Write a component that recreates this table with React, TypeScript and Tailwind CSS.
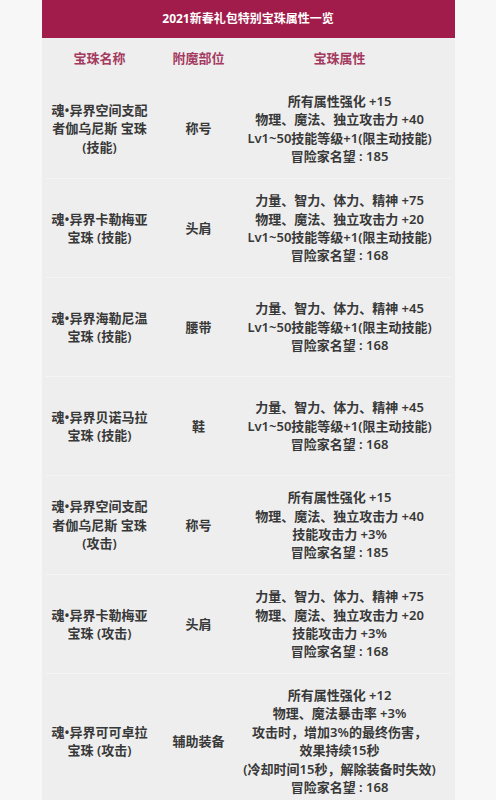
import React from 'react';

interface Gem {
  name: string[];
  slot: string;
  attrs: string[];
}

const gems: Gem[] = [
  {
    name: ['魂•异界空间支配', '者伽乌尼斯 宝珠', '(技能)'],
    slot: '称号',
    attrs: ['所有属性强化 +15', '物理、魔法、独立攻击力 +40', 'Lv1~50技能等级+1(限主动技能)', '冒险家名望 : 185'],
  },
  {
    name: ['魂•异界卡勒梅亚', '宝珠 (技能)'],
    slot: '头肩',
    attrs: ['力量、智力、体力、精神 +75', '物理、魔法、独立攻击力 +20', 'Lv1~50技能等级+1(限主动技能)', '冒险家名望 : 168'],
  },
  {
    name: ['魂•异界海勒尼温', '宝珠 (技能)'],
    slot: '腰带',
    attrs: ['力量、智力、体力、精神 +45', 'Lv1~50技能等级+1(限主动技能)', '冒险家名望 : 168'],
  },
  {
    name: ['魂•异界贝诺马拉', '宝珠 (技能)'],
    slot: '鞋',
    attrs: ['力量、智力、体力、精神 +45', 'Lv1~50技能等级+1(限主动技能)', '冒险家名望 : 168'],
  },
  {
    name: ['魂•异界空间支配', '者伽乌尼斯 宝珠', '(攻击)'],
    slot: '称号',
    attrs: ['所有属性强化 +15', '物理、魔法、独立攻击力 +40', '技能攻击力 +3%', '冒险家名望 : 185'],
  },
  {
    name: ['魂•异界卡勒梅亚', '宝珠 (攻击)'],
    slot: '头肩',
    attrs: ['力量、智力、体力、精神 +75', '物理、魔法、独立攻击力 +20', '技能攻击力 +3%', '冒险家名望 : 168'],
  },
  {
    name: ['魂•异界可可卓拉', '宝珠 (攻击)'],
    slot: '辅助装备',
    attrs: [
      '所有属性强化 +12',
      '物理、魔法暴击率 +3%',
      '攻击时，增加3%的最终伤害，',
      '效果持续15秒',
      '(冷却时间15秒，解除装备时失效)',
      '冒险家名望 : 168',
    ],
  },
];

const font = { fontFamily: '"Noto Sans", "Noto Sans CJK SC", sans-serif' };

export default function App() {
  return (
    <div className="min-h-[800px] w-[496px] bg-[#f7f7f7]" style={font}>
      <div className="mx-auto w-[413px] bg-[#eeeeee]">
        {/* 标题栏 */}
        <div className="flex h-[38px] items-center justify-center bg-[#a11c4a] text-[12px] font-bold text-white">
          2021新春礼包特别宝珠属性一览
        </div>

        {/* 表头 */}
        <div className="grid h-[41px] grid-cols-[116px_82px_200px] items-center text-center text-[13px] font-bold text-[#a53a5f]">
          <div>宝珠名称</div>
          <div>附魔部位</div>
          <div>宝珠属性</div>
        </div>

        {gems.map((g, i) => (
          <div key={i} className={i > 0 ? 'mx-1 border-t border-[#f5f5f5]' : 'mx-1'}>
            <div
              className={
                (i > 0 ? 'min-h-[98px] ' : 'min-h-[99px] ') +
                '-mx-1 grid grid-cols-[116px_82px_200px] items-center py-3 text-center text-[13px] font-semibold leading-[18.4px] text-[#383838]'
              }
            >
              <div>
                {g.name.map((n, j) => (
                  <div key={j} className="whitespace-nowrap">{n}</div>
                ))}
              </div>
              <div>{g.slot}</div>
              <div>
                {g.attrs.map((a, j) => (
                  <div key={j} className="whitespace-nowrap">{a}</div>
                ))}
              </div>
            </div>
          </div>
        ))}
      </div>
    </div>
  );
}
